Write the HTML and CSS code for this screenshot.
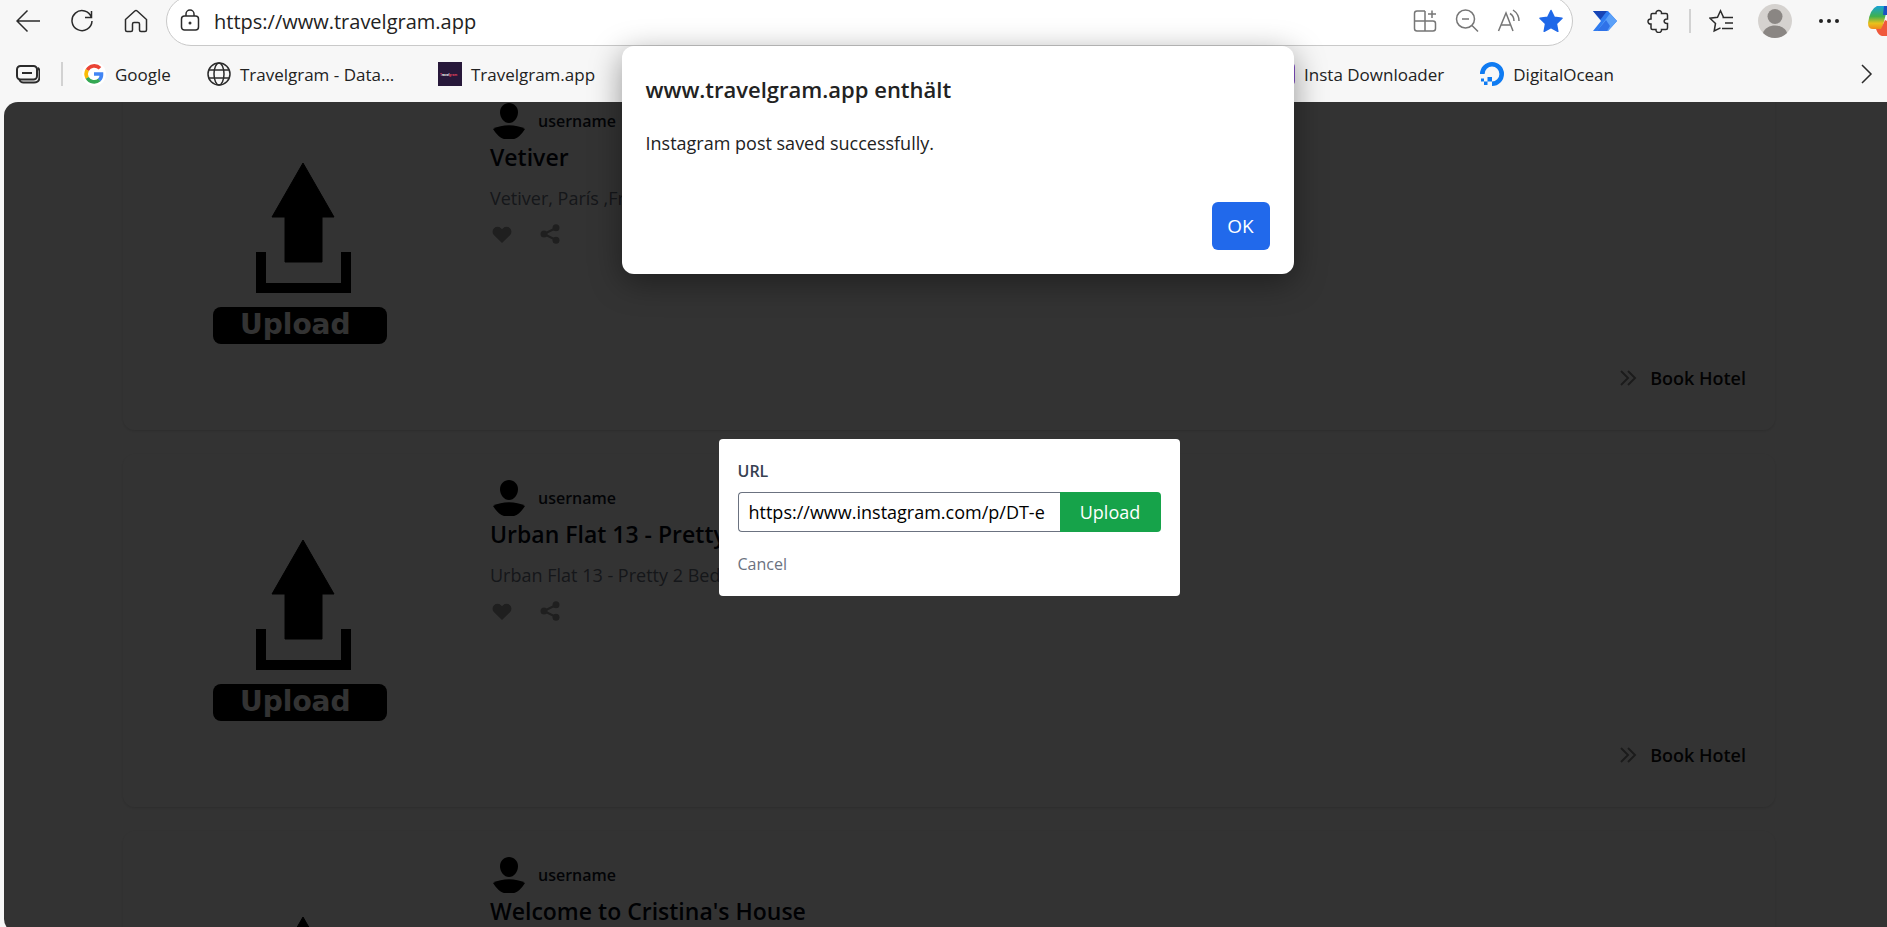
FILE: index.html
```html
<!DOCTYPE html>
<html lang="de">
<head>
    <meta charset="utf-8">
    <title>Travelgram</title>
    <link rel="stylesheet" href="styles.css">
</head>
<body>

<!-- shared icons -->
<svg class="sprite" aria-hidden="true">
    <symbol id="upload-art" viewBox="206 149 200 210">
        <path d="M302 163 L333 217 H321 V262 H284 V217 H271 Z" stroke="#000" stroke-linejoin="round"/>
        <path d="M255 252 H265 V283 H340 V252 H350 V293 H255 Z"/>
        <rect x="212" y="307" width="174" height="37" rx="8"/>
    </symbol>
    <symbol id="person" viewBox="0 0 36 36">
        <path d="M19 0 c5 0 9 4 9 9 c0 6 -4 11 -9 11 c-5 0 -9 -5 -9 -11 c0 -5 4 -9 9 -9z"/>
        <path d="M3 26 C12 21 26 21 35 26 C32 31 28 35 24 36 H14 C10 35 6 31 3 26z"/>
    </symbol>
    <symbol id="heart" viewBox="0 0 20 20">
        <path d="M2 4.200 a4.900 4.900 0 0 1 7 0 L10 5.300 L11 4.200 a4.900 4.900 0 0 1 7 7 L10 19 L2 11.200 a4.900 4.900 0 0 1 0 -7z"/>
    </symbol>
    <symbol id="share" viewBox="0 0 20 20">
        <path d="M4 10 L16 4 M4 10 L16 16" stroke="currentColor" stroke-width="2"/>
        <circle cx="4" cy="10" r="3.500"/><circle cx="16" cy="3.800" r="3.500"/><circle cx="16" cy="16.200" r="3.500"/>
    </symbol>
    <symbol id="more" viewBox="0 0 18 18">
        <path d="M2 2 L9 9 L2 16 M9 2 L16 9 L9 16" fill="none" stroke="currentColor" stroke-width="2"/>
    </symbol>
</svg>

<header class="browser">
    <div class="toolbar">
        <button class="tool" aria-label="Zurück">
            <svg class="icon" viewBox="0 0 24 24"><path d="M24 12 H1 M11.500 1.500 L1 12 L11.500 22.500"/></svg>
        </button>
        <button class="tool" aria-label="Aktualisieren">
            <svg class="icon" viewBox="0 0 24 24"><path d="M21.500 8.500 A10 10 0 1 0 22 12 M21.500 2 V8.500 H15"/></svg>
        </button>
        <button class="tool" aria-label="Startseite">
            <svg class="icon" viewBox="0 0 24 24"><path d="M1.500 10.500 L10.800 2 Q12 1 13.200 2 L22.500 10.500 V21 Q22.500 22.500 21 22.500 H17 Q15.500 22.500 15.500 21 V15 Q15.500 13.500 14 13.500 H10 Q8.500 13.500 8.500 15 V21 Q8.500 22.500 7 22.500 H3 Q1.500 22.500 1.500 21 Z"/></svg>
        </button>

        <div class="address">
            <svg class="icon lock" viewBox="0 0 24 24"><rect x="3.500" y="7" width="17" height="14" rx="3"/><path d="M8 7 V5 a4 4 0 0 1 8 0 V7"/><circle cx="12" cy="14" r="1.500" fill="#333" stroke="none"/></svg>
            <input class="url" type="text" aria-label="Adresse" value="https://www.travelgram.app">
            <button class="tool small gray" aria-label="App installieren">
                <svg class="icon" viewBox="0 0 24 24"><path d="M12 2 H4 Q1.500 2 1.500 4.500 V19.500 Q1.500 22 4 22 H20 Q22.500 22 22.500 19.500 V14.500 Q22.500 12 20 12 H1.500 M12 2 V22 M19 1.500 V9 M15 5 H23"/></svg>
            </button>
            <button class="tool small gray" aria-label="Zoom">
                <svg class="icon" viewBox="0 0 24 24"><circle cx="10.500" cy="10" r="9"/><path d="M7 10 H14 M17 16.500 L23 22.500"/></svg>
            </button>
            <button class="tool small gray" aria-label="Laut vorlesen">
                <svg class="icon" viewBox="0 0 24 24"><path d="M1.500 22 L9 4 L16 22 M4 16 H13.500 M13 4.500 Q17 7 17 12 M16 1 Q22 5 22 12"/></svg>
            </button>
            <button class="tool small" aria-label="Favorit">
                <svg class="icon" viewBox="0 0 24 24"><path d="M12 1.500 L15.300 8.300 L23 9.300 L17.400 14.600 L18.800 22.300 L12 18.600 L5.200 22.300 L6.600 14.600 L1 9.300 L8.700 8.300 Z" fill="#1f68e8" stroke="#1f68e8" stroke-linejoin="round"/></svg>
            </button>
        </div>

        <button class="tool" aria-label="Power Automate">
            <svg class="icon flat" viewBox="0 0 24 24"><path d="M0 2 H15 L24 12 L15 22 H0 L8 12 Z" fill="#2f7cf0"/><path d="M0 2 H14 L7.500 10.500 Z" fill="#1744b4"/><path d="M17 4.500 L24 12 L15 22 H4 Z" fill="#5ba0f8"/><path d="M13 11 L17 17 L14 22 H4 Z" fill="#2f72e8"/></svg>
        </button>
        <button class="tool" aria-label="Erweiterungen">
            <svg class="icon" viewBox="0 0 24 24"><path d="M5.500 4.500 H9 C8.500 0.500 15 0.500 14.500 4.500 H19 Q20.500 4.500 20.500 6 V10 C16 9.500 16 15 20.500 14.500 V19 Q20.500 20.500 19 20.500 H14.500 C15 24.500 8.500 24.500 9 20.500 H5.500 Q4 20.500 4 19 V15 C0 15.500 0 9.500 4 10 V6 Q4 4.500 5.500 4.500 Z"/></svg>
        </button>
        <span class="divider"></span>
        <button class="tool" aria-label="Favoriten">
            <svg class="icon" viewBox="0 0 24 24"><path d="M16.500 8.500 L14.500 8.200 L11.500 1.800 L8.500 8.200 L1 9.200 L6.500 14.500 L5.200 22 L11.500 18.800 M13.500 8.500 H24 M16 14 H24 M13 19.500 H24"/></svg>
        </button>
        <button class="tool" aria-label="Profil">
            <svg class="profile" viewBox="0 0 34 34"><circle cx="17" cy="17" r="17" fill="#d5d2cf"/><circle cx="17" cy="12.500" r="7.500" fill="#8a8683"/><path d="M5 29 C8 19 26 19 29 29 A17 17 0 0 1 5 29z" fill="#8a8683"/></svg>
        </button>
        <button class="tool" aria-label="Einstellungen">
            <svg class="icon" viewBox="0 0 24 24"><g fill="#222" stroke="none"><circle cx="4" cy="12" r="2"/><circle cx="12" cy="12" r="2"/><circle cx="20" cy="12" r="2"/></g></svg>
        </button>
        <button class="tool copilot" aria-label="Copilot">
            <svg viewBox="0 0 32 32">
                <defs><linearGradient id="cop" x1="0" y1="0" x2="0" y2="1"><stop offset="0" stop-color="#18a3d8"/><stop offset=".45" stop-color="#3fb04f"/><stop offset=".75" stop-color="#e8c21c"/><stop offset="1" stop-color="#f08a1c"/></linearGradient></defs>
                <path d="M9 1 H20 L14 24 H5 Q0 24 0 18 Q2 4 9 1z" fill="url(#cop)"/>
                <path d="M16 1 H26 L20 10 H15z" fill="#1a52c4"/>
                <path d="M13 24 L17 15 L26 20 L20 31 H14 Q10 30 8 24z" fill="#f0583c"/>
            </svg>
        </button>
    </div>

    <nav class="bookmarks">
        <button class="tool" aria-label="Arbeitsbereiche">
            <svg class="icon" viewBox="0 0 24 24"><path d="M3.500 18 Q4.500 20.500 7.500 20.500 H18 Q23.500 20.500 23.500 15 V9 Q23.500 7 21.500 6" stroke-width="2"/><rect x="1" y="4" width="20" height="13.500" rx="3.500" stroke-width="2"/><path d="M6 11 H16" stroke-width="2"/></svg>
        </button>
        <span class="divider"></span>
        <a class="bookmark" href="#">
            <svg class="fav" viewBox="0 0 24 24"><circle cx="12" cy="12" r="12" fill="#fff"/><g fill="none" stroke-width="3.600"><path d="M18 6.300 A8 8 0 0 0 5.200 8.200" stroke="#ea4335"/><path d="M5.200 8 A8 8 0 0 0 5.200 16" stroke="#fbbc05"/><path d="M5.200 15.800 A8 8 0 0 0 17.400 17.900" stroke="#34a853"/><path d="M17.200 18 A8 8 0 0 0 19.500 12 H12" stroke="#4285f4"/></g></svg>
            <span>Google</span>
        </a>
        <a class="bookmark" href="#">
            <svg class="fav icon" viewBox="0 0 24 24"><circle cx="12" cy="12" r="11"/><ellipse cx="12" cy="12" rx="5" ry="11"/><path d="M2 8 H22 M2 16 H22"/></svg>
            <span class="long">Travelgram - Data...</span>
        </a>
        <a class="bookmark" href="#">
            <svg class="fav" viewBox="0 0 24 24"><rect width="24" height="24" fill="#27183a"/><text x="2" y="14" class="tiny"><tspan fill="#e0405a">T</tspan><tspan fill="#fff">ravel</tspan><tspan fill="#e0405a">gram</tspan></text></svg>
            <span>Travelgram.app</span>
        </a>
        <div class="more-bookmarks">
            <a class="bookmark" href="#">
                <svg class="fav" viewBox="0 0 24 24"><rect width="24" height="24" rx="5" fill="#8450c8"/></svg>
                <span>Insta Downloader</span>
            </a>
            <a class="bookmark" href="#">
                <svg class="fav" viewBox="0 0 24 24"><path d="M2.300 12 A9.700 9.700 0 1 1 12 21.700" fill="none" stroke="#0f7bf2" stroke-width="4.600"/><path d="M7.500 15 H12 V19.500 H7.500z M4 19.500 H7.500 V23 H4z M1 16.500 H4 V19.500 H1z" fill="#0f7bf2"/></svg>
                <span>DigitalOcean</span>
            </a>
        </div>
        <button class="tool small" aria-label="Weitere Favoriten">
            <svg class="icon" viewBox="0 0 24 24"><path d="M8 3 L17 12 L8 21"/></svg>
        </button>
    </nav>
</header>

<main class="viewport">
    <div class="posts">
        <article class="card">
            <svg class="art" viewBox="0 0 200 210"><use href="#upload-art" width="200" height="210"/><text x="33" y="185">Upload</text></svg>
            <div class="info">
                <div class="user"><svg class="avatar"><use href="#person"/></svg>username</div>
                <h2>Vetiver</h2>
                <p>Vetiver, París ,France</p>
                <div class="actions">
                    <button aria-label="Gefällt mir"><svg><use href="#heart"/></svg></button>
                    <button aria-label="Teilen"><svg><use href="#share"/></svg></button>
                </div>
                <a class="book" href="#"><svg><use href="#more"/></svg>Book Hotel</a>
            </div>
        </article>

        <article class="card">
            <svg class="art" viewBox="0 0 200 210"><use href="#upload-art" width="200" height="210"/><text x="33" y="185">Upload</text></svg>
            <div class="info">
                <div class="user"><svg class="avatar"><use href="#person"/></svg>username</div>
                <h2>Urban Flat 13 - Pretty</h2>
                <p>Urban Flat 13 - Pretty 2 Bed</p>
                <div class="actions">
                    <button aria-label="Gefällt mir"><svg><use href="#heart"/></svg></button>
                    <button aria-label="Teilen"><svg><use href="#share"/></svg></button>
                </div>
                <a class="book" href="#"><svg><use href="#more"/></svg>Book Hotel</a>
            </div>
        </article>

        <article class="card">
            <svg class="art" viewBox="0 0 200 210"><use href="#upload-art" width="200" height="210"/></svg>
            <div class="info">
                <div class="user"><svg class="avatar"><use href="#person"/></svg>username</div>
                <h2>Welcome to Cristina's House</h2>
            </div>
        </article>
    </div>

    <div class="overlay">
        <form class="modal">
            <label for="post-url">URL</label>
            <div class="field">
                <input id="post-url" type="text" value="https://www.instagram.com/p/DT-e">
                <button type="button">Upload</button>
            </div>
            <button type="button" class="cancel">Cancel</button>
        </form>
    </div>
</main>

<div class="alert" role="alertdialog" aria-labelledby="alert-title">
    <h1 id="alert-title">www.travelgram.app enthält</h1>
    <p>Instagram post saved successfully.</p>
    <button>OK</button>
</div>

</body>
</html>
```

FILE: styles.css
```css
* { box-sizing: border-box; }

body {
    margin: 0;
    height: 100vh;
    overflow: hidden;
    display: flex;
    flex-direction: column;
    background: #f7f7f7;
    color: #222;
    font-family: "Open Sans", "Noto Sans", sans-serif;
    font-size: 18px;
}
button, input { font: inherit; color: inherit; }
button { border: 0; padding: 0; background: none; }
a { color: inherit; text-decoration: none; }
h1, h2, p { margin: 0; }
.sprite { position: absolute; width: 0; height: 0; }

/* browser bars */
.browser { flex: none; overflow: hidden; }
.toolbar {
    display: flex;
    align-items: center;
    height: 50px;
    margin-top: -4px;
    padding-left: 1px;
}
.tool {
    flex: none;
    width: 54px;
    height: 40px;
    display: flex;
    align-items: center;
    justify-content: center;
}
.tool.small { width: 42px; }
.icon {
    width: 24px;
    height: 24px;
    fill: none;
    stroke: #2b2b2b;
    stroke-width: 1.5;
}
.icon.flat { stroke: none; }
.gray .icon { stroke: #767676; }
.profile { width: 34px; height: 34px; }
.tool.copilot { width: 31px; justify-content: flex-start; padding-left: 12px; }
.copilot svg { flex: none; width: 32px; height: 32px; }
.divider { flex: none; width: 2px; height: 24px; margin: 0 3px; background: #d2d2d2; }
.address {
    flex: 1;
    display: flex;
    align-items: center;
    height: 50px;
    margin: 0 5px 0 3px;
    padding-left: 11px;
    background: #fff;
    border: 1px solid #c9c9c9;
    border-radius: 25px;
}
.lock { flex: none; }
.url {
    flex: 1;
    min-width: 0;
    padding: 0 0 0 12px;
    border: 0;
    background: none;
    font-size: 20px;
}
.bookmarks {
    display: flex;
    align-items: center;
    height: 56px;
    padding-left: 1px;
    font-size: 17px;
}
.bookmarks .divider { margin: 0 19px 0 6px; }
.bookmark {
    display: flex;
    align-items: center;
    gap: 9px;
    margin-right: 36px;
    white-space: nowrap;
}
.bookmark .long { width: 162px; }
.fav { flex: none; width: 24px; height: 24px; }
.tiny { font-size: 3px; font-weight: 700; }
.more-bookmarks { display: flex; margin-left: auto; padding-right: 195px; }

/* page */
.viewport {
    flex: 1;
    min-height: 0;
    position: relative;
    margin: 0 -7px -6px 4px;
    overflow: hidden;
    background: #fff;
    border-radius: 14px 0 0 14px;
}
.posts {
    display: flex;
    flex-direction: column;
    gap: 24px;
    width: 88%;
    max-width: 1652px;
    margin: -25px auto 0;
}
.card {
    flex: none;
    display: grid;
    grid-template-columns: 367px 1fr;
    height: 353px;
    border-radius: 12px;
    box-shadow: 0 1px 3px rgba(0, 0, 0, .15);
}
.art { width: 200px; height: 210px; margin: auto; }
.art text {
    fill: #fff;
    font-family: "DejaVu Sans", sans-serif;
    font-size: 28px;
    font-weight: 700;
}
.info {
    display: flex;
    flex-direction: column;
    padding: 26px 29px 36px 0;
}
.user {
    display: flex;
    align-items: center;
    gap: 12px;
    font-size: 16px;
    font-weight: 600;
    color: #111827;
}
.avatar { width: 36px; height: 36px; }
.info h2 {
    color: #030712;
    font-size: 23px;
    font-weight: 600;
    line-height: 36px;
}
.info p { margin-top: 7px; color: #6b7280; line-height: 32px; }
.actions { display: flex; gap: 24px; margin-top: 8px; color: #999; }
.actions button { width: 24px; height: 24px; }
.actions svg { display: block; width: 20px; height: 24px; margin: 0 2px; fill: currentColor; }
.book {
    display: flex;
    align-items: center;
    align-self: flex-end;
    gap: 13px;
    margin-top: auto;
    color: #111;
    font-weight: 600;
    line-height: 32px;
}
.book svg { width: 18px; height: 18px; color: #888; }

/* upload modal */
.overlay {
    position: absolute;
    inset: 0;
    display: flex;
    align-items: center;
    justify-content: center;
    background: rgba(0, 0, 0, .8);
}
.modal {
    width: 461px;
    padding: 20px 19px;
    background: #fff;
    border-radius: 4px;
}
.modal label {
    display: block;
    margin-bottom: 9px;
    color: #374151;
    font-size: 16px;
    font-weight: 600;
    line-height: 24px;
}
.field { display: flex; height: 40px; }
.field input {
    flex: 1;
    min-width: 0;
    padding: 0 10px;
    border: 1px solid #6b7280;
    border-right: 0;
    border-radius: 4px 0 0 4px;
    color: #000;
}
.field button {
    width: 101px;
    background: #16a34a;
    border-radius: 0 4px 4px 0;
    color: #fff;
}
.cancel {
    display: block;
    margin-top: 20px;
    color: #6b7280;
    font-size: 16px;
    line-height: 24px;
}

/* browser message */
.alert {
    position: absolute;
    top: 46px;
    left: calc(50% + 14px);
    transform: translateX(-50%);
    display: flex;
    flex-direction: column;
    width: 672px;
    padding: 24px;
    background: #fff;
    border-radius: 12px;
    box-shadow: 0 8px 32px rgba(0, 0, 0, .4);
}
.alert h1 { font-size: 22px; font-weight: 600; line-height: 38px; }
.alert p { margin: 18px 0 42px; line-height: 34px; }
.alert button {
    align-self: flex-end;
    width: 58px;
    height: 48px;
    background: #2169eb;
    border-radius: 6px;
    color: #fff;
    font-size: 19px;
}
```
